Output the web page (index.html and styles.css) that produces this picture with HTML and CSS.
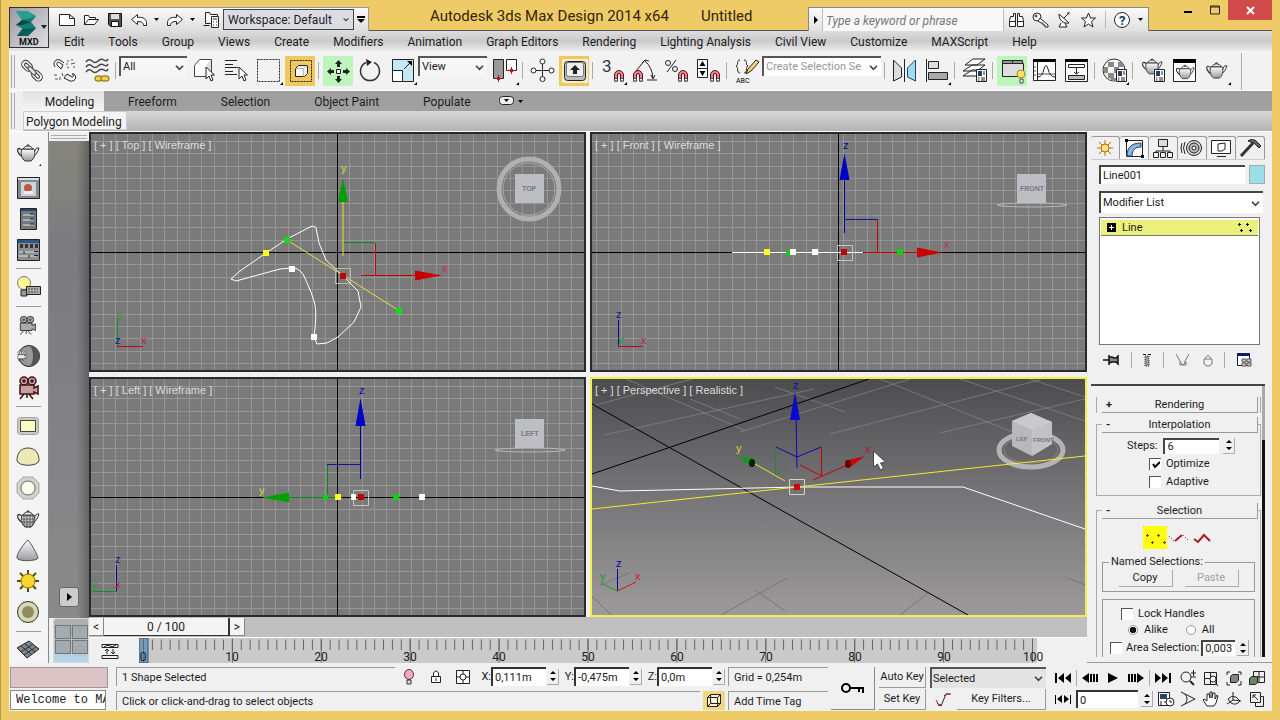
FILE: index.html
```html
<!DOCTYPE html>
<html lang="en">
<head>
<meta charset="utf-8">
<title>Autodesk 3ds Max Design 2014 x64 - Untitled</title>
<link rel="stylesheet" href="styles.css">
</head>
<body>
<svg class="defs" aria-hidden="true">
  <defs>
    <linearGradient id="metal" x1="0" y1="0" x2="0" y2="1"><stop offset="0" stop-color="#fff"/><stop offset="1" stop-color="#9a9a9e"/></linearGradient>
    <linearGradient id="floor" x1="0" y1="0" x2="0" y2="1"><stop offset="0" stop-color="#4c4c4e"/><stop offset="0.35" stop-color="#6a6a6c"/><stop offset="1" stop-color="#9c9a9b"/></linearGradient>
    <pattern id="grid" x="337" y="252" width="37" height="37" patternUnits="userSpaceOnUse">
      <path d="M0 0h1v37H0zM12 0h1v37h-1zM25 0h1v37h-1zM0 0h37v1H0zM0 12h37v1H0zM0 25h37v1H0z" fill="#969696"/>
    </pattern>
    <symbol id="teapot" viewBox="0 0 24 18">
      <path d="M6 6C2 3 1 5 2 8c1 3 3 4 5 5" fill="none" stroke="#333" stroke-width="1.300"/>
      <path d="M17 9c2-1 2-4 4-5h2c-1 4-3 7-6 9z" fill="#eee" stroke="#333"/>
      <path d="M6 5h12c2 5 0 10-3 12H9C6 15 4 10 6 5z" fill="url(#metal)" stroke="#333"/>
      <path d="M7 5c1-2 3-3 5-3s4 1 5 3zM11 2V1h2v1" fill="#eee" stroke="#333"/>
    </symbol>
    <symbol id="magnet" viewBox="0 0 12 13">
      <path d="M1.500 12V6a4.500 4.500 0 0 1 9 0v6H7.500V6a1.500 1.500 0 0 0-3 0v6z" fill="#f08088" stroke="#5a1018"/>
      <path d="M1.500 9.500h3v2.500h-3zM7.500 9.500h3v2.500h-3z" fill="#fff" stroke="#444"/>
    </symbol>
    <symbol id="cursor" viewBox="0 0 10 16">
      <path d="M1 1v12l3-3 2 5 2-1-2-5h3.500z" fill="#fff" stroke="#222"/>
    </symbol>
    <symbol id="dialog" viewBox="0 0 11 13">
      <path d="M.5.5h10v12H.5z" fill="#fff" stroke="#222"/><path d="M2 2h4v5H2z" fill="#23406e"/><path d="M7 3h2M7 5h2M2 9h1.500M5 9h4M2 11h1.500M5 11h4" stroke="#222"/>
    </symbol>
    <symbol id="reel" viewBox="0 0 24 24">
      <circle cx="8" cy="5" r="4"/><circle cx="16" cy="5" r="4"/><path d="M4 9h14v3l4-2v8l-4-2v2H4zM8 18l-4 5M13 18l4 5M11 18v4"/><circle cx="8" cy="5" r="1"/><circle cx="16" cy="5" r="1"/>
    </symbol>
  </defs>
</svg>

<div class="app">
  <header class="head">
    <button class="logo" aria-label="Application menu">
      <svg width="38" height="39" viewBox="0 0 38 39">
        <path d="M6 3h11l9 5-5 6 5 6-8 8H7l6-7-7-4 6-5z" fill="#147d76"/><path d="M6 3h11l9 5-9 3-5 1z" fill="#2a9d92"/><path d="M12 21l14-1-8 8H7z" fill="#0b5c58"/><path d="M6 17l6-5 9 2-8 3z" fill="#0a4a48"/>
        <path d="M31 17h6l-3 4z" fill="#222"/>
        <text x="9" y="37" class="logo-text">MXD</text>
      </svg>
    </button>
    <div class="title-row">
      <div class="qat">
        <button aria-label="New"><svg width="16" height="16"><path d="M.5 2.500h10l5 4v7H.5zM10.500 2.500v4h5" class="ln"/></svg></button>
        <button aria-label="Open"><svg width="16" height="16"><path d="M1.500 12.500v-9h4l1 2h6v2M1.500 12.500l4-5h10l-4 5z" class="ln"/></svg></button>
        <button aria-label="Save"><svg width="16" height="16"><path d="M1.500 1.500h13v13H3.500l-2-2z" fill="#555" stroke="#111"/><path d="M4 2h8v5H4z" fill="#ddd"/><path d="M4.500 9.500h7v5h-7z" fill="#fff" stroke="#111"/></svg></button>
        <button aria-label="Undo"><svg width="16" height="16"><path d="M.5 7.500l6-5v3c6-1 9 2 9 5v3h-3c0-3-2-4-6-4v3z" class="ln"/></svg></button>
        <button class="narrow" aria-label="Undo list"><svg width="6" height="4"><path d="M0 0h5L2.500 3z"/></svg></button>
        <button aria-label="Redo"><svg width="16" height="16"><path d="M15.500 7.500l-6-5v3c-6-1-9 2-9 5v3h3c0-3 2-4 6-4v3z" class="ln"/></svg></button>
        <button class="narrow" aria-label="Redo list"><svg width="6" height="4"><path d="M0 0h5L2.500 3z"/></svg></button>
        <button aria-label="Project folder"><svg width="17" height="17"><path d="M2.500 12.500h5M2.500 12.500v-11h4l1 2h7v3M.5 14.500h6" class="ln"/><path d="M8.500 5.500h7v11h-7z" fill="#fff" stroke="#222"/><path d="M10 8h4M10 11h1M13 11h1M10 14h1M13 14h1" stroke="#222"/></svg></button>
        <select class="workspace" aria-label="Workspace"><option>Workspace: Default</option></select>
        <button class="narrow" aria-label="Customize toolbar"><svg width="8" height="8"><path d="M0 0h8v2H0zM0 3h8L4 7z"/></svg></button>
      </div>
      <h1 class="title"><span>Autodesk 3ds Max Design 2014 x64</span><span>Untitled</span></h1>
      <div class="info">
        <button class="play" aria-label="Collapse search"><svg width="6" height="8"><path d="M1 0l4 4-4 4z"/></svg></button>
        <input type="text" placeholder="Type a keyword or phrase" aria-label="Search">
        <button aria-label="Find"><svg width="17" height="16"><path d="M2.500 4.500h3v-3h2v13h-6v-6zM14.500 4.500h-3v-3h-2v13h6v-6zM1.500 9.500h6M9.500 9.500h6" class="ln"/></svg></button>
        <button aria-label="Subscription"><svg width="17" height="16"><circle cx="5" cy="5" r="4" class="ln"/><circle cx="4" cy="4" r="1" class="ln"/><path d="M8 6l8 7v2h-3v-2h-2v-2H9L6 9z" class="ln"/></svg></button>
        <button aria-label="Communication"><svg width="17" height="16"><path d="M3 2c0 6 4 10 10 9zM8 6l5-5M11 1l3 0M5 11l-2 4h8l-2-4" class="ln"/></svg></button>
        <button aria-label="Favorites"><svg width="17" height="16"><path d="M8.500 1l2 5h5l-4 3.500 1.500 5.500-4.500-3-4.500 3L5.500 9.500l-4-3.500h5z" class="ln"/></svg></button>
        <i class="vsep"></i>
        <button class="help" aria-label="Help"><svg width="18" height="18"><circle cx="9" cy="9" r="7.500" class="ln"/><text x="6" y="14" class="q">?</text></svg></button>
        <button class="narrow" aria-label="Help list"><svg width="6" height="4"><path d="M0 0h5L2.500 3z"/></svg></button>
      </div>
      <div class="win">
        <button aria-label="Minimize"><svg width="10" height="10"><path d="M1 6h8v2H1z"/></svg></button>
        <button aria-label="Maximize"><svg width="12" height="10"><path d="M1.500 1h9v8h-9zM1 2h10" fill="none" stroke="#222"/></svg></button>
        <button class="close" aria-label="Close"><svg width="9" height="9"><path d="M1 1l7 7M8 1l-7 7" stroke="#fff" stroke-width="2"/></svg></button>
      </div>
    </div>
    <nav class="menu">
      <button>Edit</button><button>Tools</button><button>Group</button><button>Views</button><button>Create</button><button>Modifiers</button><button>Animation</button><button>Graph Editors</button><button>Rendering</button><button>Lighting Analysis</button><button>Civil View</button><button>Customize</button><button>MAXScript</button><button>Help</button>
    </nav>
  </header>

  <div class="toolbar">
    <i class="grip"></i>
    <button aria-label="Link"><svg viewBox="0 0 32 36"><g fill="none" stroke="#333" transform="rotate(45 15 17)"><rect x="2.500" y="13.500" width="12" height="8" rx="4"/><rect x="5.500" y="16" width="6" height="3" rx="1.500"/><rect x="16.500" y="13.500" width="12" height="8" rx="4"/><rect x="19.500" y="16" width="6" height="3" rx="1.500"/><rect x="10.500" y="15.500" width="10" height="4" rx="2" fill="#ddd"/></g></svg></button>
    <button aria-label="Unlink"><svg viewBox="0 0 32 36"><g class="nf"><path d="M6 14c-3-4 1-9 5-7l4 3M8 12c-1-2 1-4 3-2l3 2-2 4-4-4M25 21c4 4 0 8-4 7l-6-3 3-4 5 3c2 0 2-2 0-3z"/><path d="M18 8h2M22 7h2M17 11h2M22 11l4-1M18 14l2 1M24 14h2M5 22h3M6 26h3M11 24v3M13 20l1 3" stroke="#555"/></g></svg></button>
    <button aria-label="Bind to space warp"><svg viewBox="0 0 32 36"><path d="M5 9q3-4 6-1t6 0 6-1 4-1M5 14q3-4 6-1t6 0 6-1 4-1M5 19q3-4 6-1t6 0 6-1 4-1" fill="none" stroke="#444" stroke-width="1.500"/><rect x="14" y="23" width="7" height="5" rx="2" fill="#f3d24a" stroke="#7a5c00"/><rect x="20" y="23" width="8" height="5" rx="2" fill="#f3d24a" stroke="#7a5c00"/></svg></button>
    <i class="tsep"></i>
    <select class="w68" aria-label="Selection filter"><option>All</option></select>
    <button aria-label="Select object"><svg viewBox="0 0 32 36"><path d="M6.500 12.500l5-6h12v14l-5 3h-12z" fill="#fdfdfd" stroke="#444"/><path d="M18 23V12l5-5v13z" fill="#ddd"/><use href="#cursor" x="17" y="13" width="10" height="16"/></svg></button>
    <button aria-label="Select by name"><svg viewBox="0 0 32 36"><path d="M5 7.500h12M5 11.500h8M5 14.500h13M5 18.500h8M5 21.500h12" class="nf"/><use href="#cursor" x="18" y="13" width="10" height="16"/></svg></button>
    <button aria-label="Region"><svg viewBox="0 0 32 36"><path d="M5.500 6.500h22v22h-22z" class="nf dash"/><path d="M31 29v3h-3z"/></svg></button>
    <button class="on gold" aria-label="Window crossing"><svg viewBox="0 0 32 36"><path d="M6.500 7.500h21v21h-21z" class="nf dash"/><path d="M11.500 15.500l3-3h9v8l-3 3h-9z" fill="#f6f6f6" stroke="#222"/><path d="M11.500 15.500h8l4-3M19.500 15.500v8" fill="none" stroke="#bbb"/></svg></button>
    <i class="tsep"></i>
    <button class="on green" aria-label="Move"><svg viewBox="0 0 32 36"><path d="M16.500 7l3.500 4h-2v3h-3v-3h-2zM16.500 30l3.500-4h-2v-3h-3v3h-2zM5 18.500l4-3.500v2h3v3H9v2zM28 18.500l-4-3.500v2h-3v3h3v2z" fill="#222"/><path d="M14.500 16.500h4v4h-4z" fill="#fff" stroke="#222"/></svg></button>
    <button aria-label="Rotate"><svg viewBox="0 0 32 36"><path d="M12 9.500a9.500 9.500 0 1 0 8 0" fill="none" stroke="#333" stroke-width="1.500"/><path d="M12 6l6 3-5 4z" fill="#222"/></svg></button>
    <button aria-label="Scale"><svg viewBox="0 0 32 36"><path d="M6.500 6.500h21v22h-21z" fill="#c5e8f5" stroke="#222"/><path d="M6.500 17.500h10v11h-10z" fill="#fff" stroke="#222"/><path d="M18 16l6-6" class="nf"/><path d="M26 8v5l-5-5z"/><path d="M31 29v3h-3z"/></svg></button>
    <select class="w70" aria-label="Reference coordinate system"><option>View</option></select>
    <button aria-label="Pivot"><svg viewBox="0 0 32 36"><path d="M5.500 6.500h10v19h-10z" fill="#999" stroke="#222"/><path d="M18.500 6.500h10v11h-10z" fill="#fff" stroke="#222"/><path d="M10.500 22v7M7 25.500h7M23.500 14v7M20 17.500h7" stroke="#b0132a"/><path d="M9 24h3v3H9zM22 16h3v3h-3z" fill="#b0132a"/><path d="M31 29v3h-3z"/></svg></button>
    <i class="tsep"></i>
    <button aria-label="Manipulate"><svg viewBox="0 0 32 36"><path d="M16.500 10v14M8 17.500h17" class="nf"/><circle cx="16.500" cy="8.500" r="2.500" class="ln"/><circle cx="16.500" cy="26" r="2.500" class="ln"/><circle cx="7.500" cy="17.500" r="2.500" class="ln"/><circle cx="25.500" cy="17.500" r="2.500" class="ln"/></svg></button>
    <button class="on gold" aria-label="Keyboard override"><svg viewBox="0 0 32 36"><path d="M4 6h26v24H4z" fill="#f4ecd0"/><rect x="6.500" y="8.500" width="21" height="19" rx="3" fill="#bbb" stroke="#222"/><rect x="8.500" y="9.500" width="17" height="14" rx="2" fill="#eee" stroke="#777"/><path d="M17 12l5 5h-3v4h-4v-4h-3z" fill="#222"/></svg></button>
    <i class="tsep"></i>
    <button aria-label="Snaps"><svg viewBox="0 0 32 36"><text x="6" y="19" class="big">3</text><use href="#magnet" x="17" y="16" width="12" height="13"/><path d="M31 29v3h-3z"/></svg></button>
    <button aria-label="Angle snap"><svg viewBox="0 0 32 36"><path d="M8 18l9-11M19 27h10M17 8q7 6 8 17M14 10l3-3 4 1M23 22l2 4 2-4" class="nf"/><use href="#magnet" x="4" y="16" width="12" height="13"/></svg></button>
    <button aria-label="Percent snap"><svg viewBox="0 0 32 36"><circle cx="8" cy="10" r="2.500" class="nf"/><circle cx="15" cy="16" r="2.500" class="nf"/><path d="M16 7L7 19" class="nf"/><use href="#magnet" x="17" y="16" width="12" height="13"/></svg></button>
    <button aria-label="Spinner snap"><svg viewBox="0 0 32 36"><path d="M5.500 6.500h10v18h-10zM5 15.500h11" class="ln"/><path d="M10.500 8l3 5h-6zM10.500 23l3-5h-6z"/><use href="#magnet" x="17" y="16" width="12" height="13"/></svg></button>
    <i class="tsep"></i>
    <button aria-label="Edit named selections"><svg viewBox="0 0 32 36"><path d="M10 7c-4 0-1 5-4 6 3 1 0 7 4 7M14 7c4 0 1 5 4 6-3 1 0 7-4 7" class="nf"/><path d="M16 21l2-5 8-9 3 2-8 9z" fill="#f4d474" stroke="#222"/><text x="6" y="30" class="tiny">ABC</text></svg></button>
    <select class="w118 dim" aria-label="Named selection set"><option>Create Selection Se</option></select>
    <i class="tsep"></i>
    <button aria-label="Mirror"><svg viewBox="0 0 32 36"><path d="M5.500 7l8 8v9l-8 4z" fill="#ddd" stroke="#222"/><path d="M27.500 7l-8 8v9l8 4z" fill="#9fdcf2" stroke="#246"/><path d="M16.500 6v23" stroke="#222"/></svg></button>
    <button aria-label="Align"><svg viewBox="0 0 32 36"><path d="M6.500 6v23" stroke="#222"/><path d="M8.500 8.500h10v7h-10z" fill="#ddd" stroke="#222"/><path d="M8.500 19.500h19v7h-19z" fill="#aaa" stroke="#222"/><path d="M31 29v3h-3z"/></svg></button>
    <i class="tsep"></i>
    <button aria-label="Layers"><svg viewBox="0 0 32 36"><path d="M5 23l9-6h13l-8 6zM5 18l9-6h13l-8 6zM7 12l8-6h12l-8 6z" class="ln"/><use href="#dialog" x="18" y="16" width="11" height="13"/></svg></button>
    <i class="tsep"></i>
    <button class="on green" aria-label="Toggle ribbon"><svg viewBox="0 0 32 36"><path d="M6.500 10.500v-3h10v3zM16.500 10.500v-3h10v3z" fill="#999" stroke="#222"/><path d="M6.500 10.500h21v13h-21z" fill="#ddd" stroke="#222"/><circle cx="25" cy="21" r="4" fill="#fbe36b" stroke="#a58a1a"/><path d="M24 26h3v4h-3z" fill="#fff" stroke="#444"/></svg></button>
    <button aria-label="Curve editor"><svg viewBox="0 0 32 36"><path d="M5.500 6.500h22v21h-22zM9.500 8v20" class="ln"/><path d="M5 6h23v3H5z"/><path d="M6 14h2M6 18h2M6 22h2M10 21h17" stroke="#555"/><path d="M10 24q4 0 6-8 2-7 4 0 2 8 7 8" class="nf"/></svg></button>
    <button aria-label="Schematic view"><svg viewBox="0 0 32 36"><path d="M5.500 6.500h22v22h-22z" class="ln"/><path d="M5 6h23v3H5z"/><path d="M8.500 11.500h16v3h-16z" class="ln"/><path d="M8.500 22.500h16v4h-16z" fill="#bbb" stroke="#222"/><path d="M16.500 15v6M14 19l2.500 2 2.500-2" class="nf"/></svg></button>
    <i class="tsep"></i>
    <button aria-label="Material editor"><svg viewBox="0 0 32 36"><circle cx="16" cy="17" r="11" fill="#f5f5f5" stroke="#333"/><path d="M10 9h6v5h-6zM20 9h4l2 5h-6zM6 14h4v6H6zM16 14h5v6h-5zM10 20h6v5h-6zM12 25h6v3h-4z" fill="#888"/><use href="#dialog" x="18" y="16" width="11" height="13"/><path d="M31 29v3h-3z"/></svg></button>
    <i class="tsep"></i>
    <button aria-label="Render setup"><svg viewBox="0 0 32 36"><use href="#teapot" x="5" y="5" width="22" height="17"/><use href="#dialog" x="18" y="16" width="11" height="13"/></svg></button>
    <button aria-label="Rendered frame"><svg viewBox="0 0 32 36"><path d="M5.500 6.500h22v22h-22z" class="ln"/><path d="M5 6h23v4H5z"/><use href="#teapot" x="7" y="11" width="20" height="16"/></svg></button>
    <button aria-label="Render production"><svg viewBox="0 0 32 36"><use href="#teapot" x="5" y="9" width="23" height="17"/><path d="M31 29v3h-3z"/></svg></button>
    <i class="edge"></i>
  </div>

  <div class="ribbon">
    <i class="grip"></i>
    <div class="ribbon-tabs">
      <button class="active">Modeling</button><button>Freeform</button><button>Selection</button><button>Object Paint</button><button>Populate</button>
      <button class="mini" aria-label="Ribbon options"><svg width="26" height="10"><rect x=".5" y=".5" width="14" height="8" rx="3" fill="#eee" stroke="#222"/><path d="M5 3h5l-2.500 3zM19 4h5l-2.500 3z"/></svg></button>
    </div>
    <div class="ribbon-panel"><button>Polygon Modeling</button></div>
  </div>

  <main class="main">
    <aside class="tools">
      <button class="first" aria-label="Teapot"><svg viewBox="0 0 30 31"><use href="#teapot" x="3" y="6" width="24" height="18"/><path d="M28 26v2h-2z"/></svg></button>
      <button aria-label="Render window"><svg viewBox="0 0 30 31"><path d="M4.500 5.500h22v21h-22z" fill="#888" stroke="#222"/><path d="M5 6h21v2H5z" fill="#ddd"/><path d="M8 10h15v14H8z" fill="#c9d4e4"/><circle cx="15" cy="16" r="4" fill="#c0573f"/><path d="M11 19h9v3h-9z" fill="#f0f0f0"/></svg></button>
      <button aria-label="Script listing"><svg viewBox="0 0 30 31"><path d="M7.500 5.500h16v21h-16z" fill="#707880" stroke="#222"/><path d="M8 6h15v2H8z" fill="#24456e"/><path d="M10 12h11M10 17h11M10 22h11" stroke="#e5e5e5"/><path d="M17 11h4M17 16h4M17 21h4" stroke="#222"/></svg></button>
      <button aria-label="Track bars"><svg viewBox="0 0 30 31"><path d="M4.500 5.500h22v21h-22z" fill="#8a8f94" stroke="#222"/><path d="M5 6h21v3H5z" fill="#2c5686"/><path d="M7 10h3v4H7zM12 10h3v4h-3zM17 10h3v4h-3zM22 10h3v4h-3z" fill="#333"/><path d="M6 18h18M6 22h18" stroke="#ddd"/><path d="M11 17v3M16 21v3M21 17.500h4M21 21.500h4" stroke="#222"/></svg></button>
      <hr>
      <button aria-label="Light lister"><svg viewBox="0 0 30 31"><circle cx="11" cy="11" r="6.500" fill="#fafa9a" stroke="#777"/><path d="M8 18h6v6H8z" fill="#999" stroke="#222"/><path d="M13.500 14.500h14v8h-14z" fill="#aaa" stroke="#222"/><path d="M15 17h10M15 20h10" stroke="#444" stroke-dasharray="2 1"/></svg></button>
      <hr>
      <button aria-label="Camera"><svg viewBox="0 0 30 31"><use href="#reel" x="4" y="5" width="20" height="21" fill="#aaa" stroke="#222"/></svg></button>
      <button aria-label="Camera match"><svg viewBox="0 0 30 31"><circle cx="16" cy="15" r="10.500" fill="#999" stroke="#222"/><path d="M17 5a10 10 0 0 1 0 20c4-5 4-15 0-20z" fill="#555"/><use href="#reel" x="3" y="9" width="11" height="12" fill="#eee" stroke="#222"/></svg></button>
      <button aria-label="Record"><svg viewBox="0 0 30 31"><use href="#reel" x="3" y="4" width="24" height="24" fill="#c8a0a0" stroke="#401018" stroke-width="1.500"/></svg></button>
      <hr>
      <button class="gap" aria-label="Rectangle light"><svg viewBox="0 0 30 31"><rect x="4.500" y="6.500" width="21" height="17" rx="3" fill="#c9cbc4" stroke="#a5a5a0"/><path d="M7.500 9.500h15v11h-15z" fill="#fbfbc4" stroke="#444"/></svg></button>
      <button aria-label="Dome light"><svg viewBox="0 0 30 31"><path d="M4 18c0-7 4-12 11-12s11 5 11 12c0 7-22 7-22 0z" fill="#ece9b8" stroke="#444"/></svg></button>
      <button aria-label="Disc light"><svg viewBox="0 0 30 31"><path d="M10 4h10l6 6v10l-6 6H10l-6-6V10z" fill="#d0d0cc" stroke="#aaa"/><circle cx="15" cy="15" r="7" fill="#fdfdea" stroke="#666"/></svg></button>
      <button aria-label="Mesh teapot"><svg viewBox="0 0 30 31"><use href="#teapot" x="3" y="6" width="24" height="18"/><path d="M9 12h13M8 15h14M9 18h12M11 11v11M14 11v13M17 11v13M20 11v10" stroke="#555"/></svg></button>
      <button aria-label="Cone"><svg viewBox="0 0 30 31"><path d="M15 5c2 2 10 15 10 18s-20 4-21 0S13 6 15 5z" fill="url(#metal)" stroke="#555"/></svg></button>
      <button aria-label="Sun"><svg viewBox="0 0 30 31"><path d="M15 4v22M4 15h22M7 7l16 16M23 7L7 23" stroke="#5a4a00" stroke-width="2"/><circle cx="15" cy="15" r="7" fill="#fbd52c" stroke="#8a6a00"/></svg></button>
      <button aria-label="Sphere"><svg viewBox="0 0 30 31"><circle cx="15" cy="15" r="10.500" fill="#d9d7b4" stroke="#333"/><circle cx="15" cy="15" r="6" fill="#8f8c60"/></svg></button>
      <hr>
      <button aria-label="Carpet"><svg viewBox="0 0 30 31"><path d="M4 13l12-7 10 8-12 9z" fill="#7d8792" stroke="#222"/><path d="M8 11l10 8M12 9l10 8M8 17l12-8M11 20l12-8" stroke="#333"/></svg></button>
    </aside>

    <div class="layouts">
      <i class="grip-h"></i>
      <div class="layouts-body"><button class="expand" aria-label="Show layouts"><svg width="7" height="10"><path d="M1 1l5 4-5 4z"/></svg></button></div>
      <button class="quad" aria-label="Four viewports"><i></i><i></i><i></i><i></i></button>
    </div>

    <section class="center">
      <div class="views">
        <div class="view">
          <svg viewBox="91 134 493 236" preserveAspectRatio="xMidYMid slice">
            <path d="M91 134h493v236H91z" fill="#7a7a7a"/><path d="M91 134h493v236H91z" fill="url(#grid)"/>
            <path d="M337 134h1v236h-1zM91 252h493v1H91z"/>
            <path d="M231 279L240 271 266 253 287 239 310 227Q315 225 316 228L319 243 326 260 343 276 358 291 361 307 354 322 338 337 327 343 317 344 314 337Q317 315 315 305T303 274Q297 267 292 268L280 269 236 281z" class="spline"/>
            <path d="M287 240l111 70" stroke="#e6e03a" fill="none"/>
            <path d="M343 202v54" stroke="#e6e62a"/><path d="M338 202l5-24 5 24z" fill="#00a000"/>
            <path d="M344 242.500h31" stroke="#0a8a20"/><path d="M375.500 243v32" stroke="#c80000"/><path d="M361 275.500h55" stroke="#c80000"/><path d="M415 270.500l27 5-27 5z" fill="#c80000"/>
            <path d="M335.500 268.500h15v15h-15z" fill="none" stroke="#c8b4a4"/><path d="M340 273h6v6h-6z" fill="#c00000"/>
            <path d="M284 237h6v6h-6zM396 308h6v6h-6z" fill="#10e010"/><path d="M263 250h6v6h-6z" fill="#ffff20"/><path d="M289 266h6v6h-6zM311 334h6v6h-6z" fill="#fff"/>
            <text x="341" y="172" fill="#d8d840">y</text><text x="442" y="272" fill="#c03048">x</text>
            <path d="M117.500 318v28" stroke="#10902a"/><path d="M117 346.500h26" stroke="#c00020"/>
            <text x="117" y="318" fill="#2a9a30">y</text><text x="115" y="344" fill="#002090">z</text><text x="141" y="344" fill="#c02040">x</text>
            <circle cx="529" cy="189" r="30" fill="none" stroke="#b0b0b4" stroke-width="5"/><circle cx="529" cy="189" r="26" fill="none" stroke="#a8a8aa"/>
            <path d="M515 174h29v29h-29z" fill="#bdbdc4"/><text x="522" y="191" class="cube">TOP</text>
          </svg>
          <div class="tag"><button>[ + ]</button><button>[ Top ]</button><button>[ Wireframe ]</button></div>
        </div>
        <div class="view">
          <svg viewBox="592 134 493 236" preserveAspectRatio="xMidYMid slice">
            <path d="M592 134h493v236H592z" fill="#7a7a7a"/><path d="M592 134h493v236H592z" fill="url(#grid)"/>
            <path d="M838 134h1v236h-1zM592 252h493v1H592z"/>
            <path d="M732 252.500h131" stroke="#fff"/>
            <path d="M844.500 179v54" stroke="#0000a8"/><path d="M839.500 180l5-27 5 27z" fill="#0000c8"/><path d="M845 219.500h33" stroke="#1010a0"/>
            <path d="M877.500 220v32" stroke="#c80000"/><path d="M864 252.500h54" stroke="#c80000"/><path d="M917 247.500l25 5-25 5z" fill="#c80000"/>
            <path d="M837.500 245.500h15v15h-15z" fill="none" stroke="#d0c4b8"/><path d="M841 249h6v6h-6z" fill="#c00000"/>
            <path d="M786 250h5v5h-5zM897 249h6v6h-6z" fill="#10d010"/><path d="M764 249h6v6h-6z" fill="#ffff20"/><path d="M790 249h6v6h-6zM812 249h6v6h-6z" fill="#fff"/>
            <text x="843" y="149" fill="#0808a0">z</text><text x="944" y="248" fill="#c03048">x</text>
            <path d="M618.500 320v27" stroke="#0000a0"/><path d="M618 346.500h25" stroke="#c00020"/>
            <text x="616" y="318" fill="#002090">z</text><text x="641" y="344" fill="#c02040">x</text><text x="618" y="343" fill="#10a020">y</text>
            <ellipse cx="1032" cy="205" rx="35" ry="2" fill="none" stroke="#b8b8b8"/>
            <path d="M1017 174h29v29h-29z" fill="#bdbdc4"/><text x="1020" y="191" class="cube">FRONT</text>
          </svg>
          <div class="tag"><button>[ + ]</button><button>[ Front ]</button><button>[ Wireframe ]</button></div>
        </div>
        <div class="view">
          <svg viewBox="91 379 493 236" preserveAspectRatio="xMidYMid slice">
            <path d="M91 379h493v236H91z" fill="#7a7a7a"/><path d="M91 134h493v236H91z" fill="url(#grid)" transform="translate(0 245)"/>
            <path d="M337 379h1v236h-1zM91 497h493v1H91z"/>
            <path d="M360.500 425v54" stroke="#0000a8"/><path d="M355.500 426l5-28 5 28z" fill="#0000c8"/><path d="M327 464.500h34" stroke="#1010a0"/>
            <path d="M327.500 465v32M288 497.500h54" stroke="#0a8a20"/><path d="M289 492.500l-27 5 27 5z" fill="#00a000"/>
            <path d="M353.500 490.500h15v15h-15z" fill="none" stroke="#d0c4b8"/><path d="M358 494h6v6h-6z" fill="#c00000"/>
            <path d="M323 495h5v5h-5zM393 494h6v6h-6z" fill="#10d010"/><path d="M335 494h6v6h-6z" fill="#ffff20"/><path d="M351 494h5v6h-5zM419 494h6v6h-6z" fill="#fff"/>
            <text x="359" y="394" fill="#0808a0">z</text><text x="259" y="494" fill="#d8d840">y</text>
            <path d="M116.500 565v27" stroke="#0000a0"/><path d="M93 591.500h24" stroke="#10902a"/>
            <text x="115" y="563" fill="#002090">z</text><text x="115" y="588" fill="#c02040">x</text><text x="91" y="589" fill="#2a9a30">y</text>
            <ellipse cx="530" cy="450" rx="35" ry="2" fill="none" stroke="#b8b8b8"/>
            <path d="M515 419h29v29h-29z" fill="#bdbdc4"/><text x="521" y="436" class="cube">LEFT</text>
          </svg>
          <div class="tag"><button>[ + ]</button><button>[ Left ]</button><button>[ Wireframe ]</button></div>
        </div>
        <div class="view active">
          <svg viewBox="592 379 493 236" preserveAspectRatio="xMidYMid slice">
            <path d="M592 379h493v236H592z" fill="url(#floor)"/>
            <g stroke="#88888a" stroke-opacity=".7" fill="none">
              <path d="M592 406l100-27M604 435l210-46M740 432l170-53M830 434l210-54M940 433l145-34"/>
              <path d="M626 379l120 52M775 387l70 25M880 379l150 60M960 379l125 42M1030 379l55 18M690 399l50 20"/>
            </g>
            <path d="M721 615l66-37M755 590l30 21M900 615l28-22M592 596l20 20M1065 577l20 8M600 585l30-12" stroke="#777" fill="none"/>
            <path d="M592 474l277-95M592 404l376 211" stroke="#000" fill="none"/>
            <path d="M592 486l28 5 180-4h163l122 42" class="spline"/>
            <path d="M797 468l-1-50M776 447l21 10 24-10" stroke="#0808b8" fill="none"/><path d="M790 420l5-28 5 28z" fill="#0808d0"/>
            <path d="M821.500 447v30M813 480l34-15M800 465l22 11" stroke="#c80010" fill="none"/><path d="M845 461l20-5-16 12z" fill="#d00000"/><ellipse cx="848" cy="464" rx="3" ry="4" fill="#600"/>
            <path d="M775.500 449v26l13-7" stroke="#208a30" fill="none"/><path d="M755 464l30 17" stroke="#e8e428"/><path d="M738 456l17 3-3 8z" fill="#08a010"/><ellipse cx="752" cy="463" rx="3" ry="4" fill="#020"/>
            <text x="793" y="389" fill="#0808c0">z</text><text x="736" y="452" fill="#d8d840">y</text><text x="865" y="453" fill="#b01830">x</text>
            <path d="M617.500 569v22" stroke="#0000b0"/><path d="M617 591l19-9" stroke="#d01020"/><path d="M617 591l-16-8" stroke="#10a020"/>
            <text x="616" y="567" fill="#0010a0">z</text><text x="635" y="580" fill="#d01830">x</text><text x="600" y="580" fill="#209a30">y</text>
            <ellipse cx="1031" cy="450" rx="32" ry="17" fill="none" stroke="#b4b4b6" stroke-width="5"/><ellipse cx="1031" cy="450" rx="27" ry="13" fill="none" stroke="#888"/>
            <path d="M1012 421l19-8 21 9v22l-20 12-20-10z" fill="#b8b8ba"/><path d="M1012 421l19-8 21 9-20 8z" fill="#cacacc"/><path d="M1032 430l20-8v22l-20 12z" fill="#c2c2c4"/>
            <text x="1016" y="441" class="cube small">LEF</text><text x="1033" y="442" class="cube small">FRONT</text>
            <path d="M592 509l205-22 288-31" stroke="#f0ec30" fill="none"/>
            <path d="M789.500 479.500h15v15h-15z" fill="none" stroke="#ddd0c8"/><path d="M794 484h6v6h-6z" fill="#d00010"/>
            <path d="M873.500 451v16l4-3 3 6 3-2-3-5 5-1z" fill="#fff" stroke="#444"/>
          </svg>
          <div class="tag"><button>[ + ]</button><button>[ Perspective ]</button><button>[ Realistic ]</button></div>
        </div>
      </div>
      <div class="slider">
        <button aria-label="Previous frame">&lt;</button><button class="thumb">0 / 100</button><button aria-label="Next frame">&gt;</button>
      </div>
      <div class="track">
        <button class="mini-curve" aria-label="Mini curve editor"><svg width="18" height="18"><path d="M1 2.500h16v3H1zM1 13.500h16v3H1zM3 5q3-3 6-1t6-1M6 7v5M12 7v5M4 9l2-2 2 2M10 10l2 2 2-2" class="nf"/></svg></button>
        <div class="ruler">
          <svg viewBox="0 0 900 26" preserveAspectRatio="none"><path d="M0 0h9v26H0z" fill="#6f9cc0" stroke="#35506a"/><path d="M4 7h892" stroke="#666" stroke-width="11" stroke-dasharray="1 7.910" fill="none"/><path d="M4 13h892" stroke="#666" stroke-width="25" stroke-dasharray="1 88.100" fill="none"/></svg>
          <ol><li>0</li><li>10</li><li>20</li><li>30</li><li>40</li><li>50</li><li>60</li><li>70</li><li>80</li><li>90</li><li>100</li></ol>
        </div>
      </div>
    </section>

    <aside class="panel">
      <div class="tabs">
        <button aria-label="Create"><svg width="24" height="20"><path d="M12 2v16M4 10h16M6 4l12 12M18 4L6 16" stroke="#b86a10"/><circle cx="12" cy="10" r="4" fill="#ffe080" stroke="#b86a10"/></svg></button>
        <button class="active" aria-label="Modify"><svg width="24" height="20"><path d="M4.500 2.500h16v16h-16z" class="nf"/><path d="M5 18c0-9 5-13 14-13v4c-6 0-9 3-9 9z" fill="#8ab8dc" stroke="#246"/><path d="M3 1h3v3H3zM19 17h3v3h-3z"/></svg></button>
        <button aria-label="Hierarchy"><svg width="24" height="20"><path d="M7.500 1.500h9v7h-9z" fill="#ddd" stroke="#222"/><path d="M12 9v4M5 15v-2h14v2M2.500 14.500h5v5h-5zM9.500 14.500h5v5h-5zM16.500 14.500h5v5h-5z" class="nf"/></svg></button>
        <button aria-label="Motion"><svg width="24" height="20"><circle cx="14" cy="10" r="7.500" fill="#ddd" stroke="#222"/><circle cx="14" cy="10" r="5" fill="#bbb" stroke="#222"/><circle cx="14" cy="10" r="2" fill="#fff" stroke="#222"/><path d="M5 4q-3 6 0 12M2 5q-2 5 0 10" class="nf"/></svg></button>
        <button aria-label="Display"><svg width="24" height="20"><path d="M2.500 2.500h19v13h-19zM8 18.500h9M9 6l7-1v6l-3 2H9z" class="ln"/></svg></button>
        <button aria-label="Utilities"><svg width="24" height="20"><path d="M3 18L15 5" stroke="#333" stroke-width="3"/><path d="M10 3c4-3 8-1 10 2l3 3-2 2-5-5z" fill="#666" stroke="#222"/></svg></button>
      </div>
      <div class="name-row"><input type="text" value="Line001" aria-label="Object name"><button class="swatch" aria-label="Object color"></button></div>
      <select class="modlist" aria-label="Modifier List"><option>Modifier List</option></select>
      <div class="stack">
        <div class="stack-row"><svg width="9" height="9"><path d="M0 0h9v9H0z"/><path d="M2 4.500h5M4.500 2v5" stroke="#fff"/></svg><span>Line</span><svg class="dots" width="14" height="10"><path d="M0 1h3v1H0zM1 0h1v3H1zM8 1h3v1H8zM9 0h1v3H9zM2 7h3v1H2zM3 6h1v3H3zM11 7h3v1h-3zM12 6h1v3h-1z"/></svg></div>
      </div>
      <div class="stack-tools">
        <button aria-label="Pin stack"><svg width="18" height="14"><path d="M1 7h6M7 2v10M7 4h3l2 1h2l2-2v8l-2-2h-4l-3 1" fill="#888" stroke="#111" stroke-width="1.500"/></svg></button><i></i>
        <button aria-label="Show end result"><svg width="10" height="14"><path d="M1 1.500h3M6 1.500h3" stroke="#111"/><path d="M3 3h4v10H3z" fill="#999" stroke="#333" stroke-dasharray="1 1"/></svg></button><i></i>
        <button aria-label="Make unique"><svg width="16" height="14"><path d="M1 1l5 9M14 1L9 10M5 9l3 3 3-3v3H5z" fill="none" stroke="#777"/></svg></button>
        <button aria-label="Remove modifier"><svg width="12" height="14"><path d="M2 6h8v5q-4 4-8 0zM3 6q3-7 6 0" fill="none" stroke="#777"/></svg></button><i></i>
        <button aria-label="Configure sets"><svg width="16" height="15"><path d="M1.500 1.500h12v12h-12z" fill="#fff" stroke="#123"/><path d="M1 1h13v3H1z" fill="#0c1c66"/><path d="M6 7h4v3H6zM11 7h4v3h-4zM6 11h4v3H6zM11 11h4v3h-4z" fill="#ccc" stroke="#555"/></svg></button>
      </div>
      <div class="rollouts">
        <section class="roll shut"><h2><button><b>+</b>Rendering</button></h2></section>
        <section class="roll"><h2><button><b>-</b>Interpolation</button></h2>
          <div class="steps"><label for="steps">Steps:</label><input id="steps" type="text" value="6"><span class="spin"></span></div>
          <label class="chk"><input type="checkbox" checked>Optimize</label>
          <label class="chk"><input type="checkbox">Adaptive</label>
        </section>
        <section class="roll"><h2><button><b>-</b>Selection</button></h2>
          <div class="levels">
            <button class="on" aria-label="Vertex"><svg width="24" height="23"><path d="M3 9.500h3M4.500 8v3M14 9.500h3M15.500 8v3M8 16.500h3M9.500 15v3M20 16.500h3M21.500 15v3" stroke="#a03000"/></svg></button>
            <button aria-label="Segment"><svg width="24" height="23"><path d="M8 15l7-6" stroke="#b01820" stroke-width="2"/><path d="M2 10l5 5M16 9l6 6" stroke="#222" stroke-dasharray="1 2"/></svg></button>
            <button aria-label="Spline"><svg width="24" height="23"><path d="M3 13l4 3 6-7 6 6" fill="none" stroke="#b01820" stroke-width="2"/></svg></button>
          </div>
          <fieldset class="named"><legend>Named Selections:</legend><button>Copy</button><button disabled>Paste</button></fieldset>
          <fieldset class="handles">
            <label class="chk"><input type="checkbox">Lock Handles</label>
            <div class="radios"><label><input type="radio" name="h" checked>Alike</label><label><input type="radio" name="h">All</label></div>
            <div class="area"><label><input type="checkbox">Area Selection:</label><input type="text" value="0,003" aria-label="Area"><span class="spin"></span></div>
          </fieldset>
        </section>
      </div>
    </aside>
  </main>

  <footer class="status">
    <div class="listener"><div class="pink"></div><input type="text" value="Welcome to MAXScript." aria-label="MAXScript listener"></div>
    <div class="info-rows">
      <div class="row">
        <output class="box grow">1 Shape Selected</output>
        <button class="ic" aria-label="Isolate"><svg width="12" height="16"><ellipse cx="6" cy="5.500" rx="4.500" ry="5" fill="#f0a8c4" stroke="#6a2038"/><path d="M4 11h4v4H4z" fill="#ddd" stroke="#333"/></svg></button>
        <button class="ic" aria-label="Lock"><svg width="12" height="16"><path d="M1.500 7.500h9v6h-9zM3.500 7V4q2.500-4 5 0v3M6 9v3" class="ln"/></svg></button>
        <button class="ic" aria-label="Absolute mode"><svg width="16" height="16"><path d="M1.500 1.500h13v13h-13zM8 1v4M8 11v4M1 8h4M11 8h4" class="ln"/><circle cx="8" cy="8" r="3" class="ln"/></svg></button>
        <label for="cx">X:</label><input id="cx" type="text" value="0,111m"><span class="spin"></span>
        <label for="cy">Y:</label><input id="cy" type="text" value="-0,475m"><span class="spin"></span>
        <label for="cz">Z:</label><input id="cz" type="text" value="0,0m"><span class="spin"></span>
        <output class="box right">Grid = 0,254m</output>
      </div>
      <div class="row">
        <output class="box grow">Click or click-and-drag to select objects</output>
        <button class="iso" aria-label="Adaptive degradation"><svg width="16" height="15"><path d="M1.500 4.500l3-3h10v9l-3 3h-10zM1.500 4.500h10v9M11.500 4.500l3-3M4.500 2v8.500h10M4.500 10.500l-3 3" fill="#fff" fill-opacity=".7" stroke="#222"/></svg></button>
        <button class="box right">Add Time Tag</button>
      </div>
    </div>
    <button class="key" aria-label="Set keys"><svg width="26" height="14"><circle cx="6" cy="7" r="4" fill="none" stroke="#000" stroke-width="2"/><path d="M10 6h14v2H10zM18 8h2v3h-2zM22 8h2v4h-2z"/></svg></button>
    <div class="keys"><button>Auto Key</button><button>Set Key</button></div>
    <div class="filters">
      <select aria-label="Key selection"><option>Selected</option></select>
      <div><button class="tangent" aria-label="Tangents"><svg width="18" height="16"><path d="M2 11l4 3L11 2h4" fill="none" stroke="#222"/><path d="M1 8l3 6 2-2M9 4l2-2 5 0" fill="none" stroke="#b02040"/></svg></button><button class="kf">Key Filters...</button></div>
    </div>
    <div class="play-area">
      <div>
        <button aria-label="Go to start"><svg width="18" height="12"><path d="M1 1h2v10H1zM10 1v10L4 6zM17 1v10l-6-5z"/></svg></button><i></i>
        <button aria-label="Previous"><svg width="18" height="12"><path d="M8 1v10L1 6zM9 2h2v8H9zM12 2h2v8h-2zM15 2h2v8h-2z"/></svg></button>
        <button aria-label="Play"><svg width="18" height="12"><path d="M4 1v10l10-5z"/></svg></button>
        <button aria-label="Next"><svg width="18" height="12"><path d="M10 1v10l7-5zM1 2h2v8H1zM4 2h2v8H4zM7 2h2v8H7z"/></svg></button><i></i>
        <button aria-label="Go to end"><svg width="18" height="12"><path d="M15 1h2v10h-2zM8 1v10l6-5zM1 1v10l6-5z"/></svg></button>
      </div>
      <div><button aria-label="Key mode"><svg width="18" height="12"><path d="M1 2h1v9H1zM8 2v8L3 6zM10 2v8l5-4zM16 2h1v9h-1z"/></svg></button><input type="text" value="0" aria-label="Current frame"><span class="spin"></span>
        <button aria-label="Time configuration"><svg width="18" height="18"><path d="M1.500 2.500h11v13h-11z" class="ln"/><path d="M3 4h7v5H3z" fill="#24456e"/><path d="M3 12h2M7 12h2M3 14h2" class="nf"/><circle cx="13" cy="12" r="4" class="ln"/><path d="M13 10v2h2" class="nf"/></svg></button>
      </div>
    </div>
    <div class="nav">
      <button aria-label="Zoom"><svg width="20" height="18"><circle cx="8" cy="8" r="5" class="nf"/><path d="M12 12l4 4" stroke="#222" stroke-width="2"/><path d="M13 4h5M15.500 1v6M13 8h5" class="nf"/></svg></button>
      <button aria-label="Zoom all"><svg width="20" height="18"><path d="M3.500 3.500h12v12h-12zM9.500 3v13M3 9.500h13" class="nf"/><circle cx="12" cy="10" r="3" class="ln"/><path d="M14 13l3 4" class="nf"/></svg></button>
      <button aria-label="Zoom extents"><svg width="20" height="18"><path d="M3 6V3h3M14 3h3v3M3 13v3h3M17 12v4h-3" class="nf"/><path d="M6.500 7.500l2-2h6v6l-2 2h-6z" fill="#7b8a78" stroke="#222"/></svg></button>
      <button aria-label="Zoom extents all"><svg width="20" height="18"><path d="M6.500 2.500h11v11h-11zM12 2v12M6 8h12" class="nf"/><path d="M2.500 9.500l2-2h6v6l-2 2h-6z" fill="#6a8560" stroke="#222"/></svg></button>
      <button aria-label="Field of view"><svg width="20" height="18"><path d="M3 2l14 7-14 7M7 4q4 5 0 10" class="nf"/></svg></button>
      <button aria-label="Pan"><svg width="20" height="18"><path d="M6 16L2 10l1-1 3 2V4l2 0 1 4V2h2v6l1-5h2v6l2-4 1 1-2 7-2 3z" class="ln"/></svg></button>
      <button aria-label="Orbit"><svg width="20" height="18"><path d="M9 2v8l-6 4M9 10l8 1M4 9q3-4 8-2l4 4q-4 5-9 2z" class="nf"/></svg></button>
      <button aria-label="Maximize viewport"><svg width="20" height="18"><path d="M3.500 2.500h10v10h-10zM14 6.500h2.500v10h-8V13M6 5h3M6 5v3M6 5l5 5" class="nf"/></svg></button>
    </div>
  </footer>
</div>
</body>
</html>
```

FILE: styles.css
```css
* { box-sizing: border-box; }
html, body { margin: 0; height: 100%; }
body { background: #efcb68; font: 12px/16px Roboto, "Noto Sans", sans-serif; color: #1c1c1c; overflow: hidden; }
button, input, select { font: inherit; color: inherit; margin: 0; padding: 0; border: 0; background: none; border-radius: 0; outline: 0; }
button { display: flex; align-items: center; justify-content: center; white-space: nowrap; }
input[type="text"] { min-width: 0; }
svg { display: block; }
.defs { position: absolute; width: 0; height: 0; }
select { appearance: none; background: no-repeat right 3px center / 9px 7px url("data:image/svg+xml,%3Csvg xmlns='http://www.w3.org/2000/svg' viewBox='0 0 10 8'%3E%3Cpath d='M1 2l4 4 4-4' fill='none' stroke='%23444' stroke-width='2'/%3E%3C/svg%3E"); }
.ln { fill: #fff; stroke: #222; }
.nf { fill: none; stroke: #222; }
.dash { stroke-dasharray: 2 1; }

.app { display: flex; flex-direction: column; height: 100vh; padding: 0 8px 9px 8px; border-left: 1px solid #b89a48; }

/* Title and menus */
.head { display: grid; grid-template-columns: 40px 1fr; grid-template-rows: 31px 20px; background: linear-gradient(#efcb68 31px, #ddd 31px, #e6e6e6); }
.logo { grid-row: 1 / 3; margin: 7px 0 3px; border: 1px solid #333; background: linear-gradient(135deg, #9a98a4, #e0dfe4); }
.logo-text { font: bold 9px Roboto, sans-serif; fill: #111; }
.title-row { display: flex; align-items: flex-start; border-bottom: 1px solid #555; }
.qat { display: flex; align-items: center; height: 24px; margin-top: 7px; padding-left: 6px; background: linear-gradient(#fafafa, #ddd); border: 1px solid #999; border-width: 1px 1px 0 0; }
.qat button { width: 24px; height: 22px; flex: none; }
.qat .narrow { width: 12px; }
.qat button:nth-of-type(8) { width: 24px; }
.workspace { width: 131px; height: 21px; padding-left: 4px; border: 1px solid #444; background-color: #dcdce4; background-size: 6px 5px; background-position: right 4px center; }
.qat .narrow:last-child { width: 14px; }
.title { display: flex; flex: 1; gap: 32px; margin: 5px 0 0; padding-left: 61px; font: 15px/22px Roboto, "Noto Sans", sans-serif; color: #33240a; white-space: nowrap; }
.info { display: flex; align-items: center; height: 24px; margin-top: 7px; background: linear-gradient(#fafafa, #e0e0e0); border: 1px solid #888; border-bottom: 0; }
.info button { width: 24px; height: 22px; }
.info .play { width: 14px; border-right: 1px solid #bbb; }
.info input { width: 181px; height: 22px; padding: 2px 0 0 3px; background: #f8f8f8; border-right: 1px solid #bbb; font-style: italic; }
.info input::placeholder { color: #777; opacity: 1; }
.info .vsep { width: 1px; height: 18px; margin: 0 4px 0 5px; background: #bbb; }
.info .narrow { width: 14px; }
.q { font: bold 13px Roboto, sans-serif; fill: #123a6e; }
.win { display: flex; height: 20px; margin-left: 25px; }
.win button { width: 27px; height: 20px; }
.win .close { width: 44px; background: #cf4a48; }
.menu { display: flex; align-items: center; gap: 24px; padding: 2px 0 0 15px; background: linear-gradient(#ddd, #c9c9cb 50%, #ececec); white-space: nowrap; }

/* Main toolbar */
.toolbar { display: flex; align-items: flex-start; height: 40px; padding-top: 2px; background: #f2f2f2; border-bottom: 1px solid #fff; }
.grip { width: 4px; margin: 2px; border: solid #aaa; border-width: 0 1px; align-self: stretch; flex: none; }
.edge { width: 1px; margin-left: 9px; background: #aaa; align-self: stretch; }
.toolbar button { width: 32px; height: 36px; flex: none; }
.toolbar button svg { width: 32px; height: 36px; }
.toolbar .on { background: no-repeat center / 30px 30px linear-gradient(#bdf5bd, #bdf5bd); }
.toolbar .gold { background-image: linear-gradient(#f0c860, #f0c860); }
.tsep { width: 1px; height: 17px; margin: 9px 3px 0 2px; background: #aaa; flex: none; }
.toolbar select { height: 20px; margin: 3px 1px 0 0; padding-left: 2px; border: solid #555; border-width: 2px 0 0 2px; background-color: #f6f6f6; font-size: 11px; flex: none; }
.w68 { width: 68px; }
.w70 { width: 69px; }
.w118 { width: 119px; }
.toolbar .dim { color: #999; background-color: #fff; }
.big { font: 17px Roboto, sans-serif; fill: #333; }
.tiny { font: 7px Roboto, sans-serif; }

/* Ribbon */
.ribbon { display: grid; grid-template: 20px 20px / 14px 1fr; background: #f0f0f0; border-bottom: 1px solid #fff; }
.ribbon .grip { grid-row: 1 / 3; }
.ribbon-tabs { display: flex; background: #a0a0a0; }
.ribbon-tabs button { height: 20px; padding: 2px 20px 0; margin-right: 4px; }
.ribbon-tabs .active { width: 81px; padding: 2px 8px 0 20px; background: linear-gradient(#e0e0e0, #f6f6f6); }
.ribbon-tabs .mini { padding: 0 4px; }
.ribbon-panel { background: linear-gradient(#d8d8d8, #b4b4b4); }
.ribbon-panel button { height: 19px; padding: 2px 4px 0 2px; background: #f4f4f4; border: 1px solid #ccc; }

/* Work area */
.main { display: flex; flex: 1; min-height: 0; background: #f0f0f0; }
.tools { width: 40px; flex: none; padding: 4px 4px 0; overflow: hidden; border-right: 1px solid #888; background: #f4f4f4; }
.tools button { width: 30px; height: 31px; }
.tools button svg { width: 30px; height: 31px; }
.tools .first { margin: 2px 0 3px; }
.tools hr { height: 1px; margin: 3px; border: 0; background: #999; }
.tools .gap { margin-top: 4px; }
.layouts { display: flex; flex-direction: column; width: 40px; flex: none; }
.grip-h { height: 4px; margin: 3px 2px 2px; border: solid #aaa; border-width: 1px 0; flex: none; }
.layouts-body { flex: 1; display: flex; align-items: flex-end; justify-content: center; padding-bottom: 11px; background: linear-gradient(90deg, rgba(0,0,0,0) 70%, rgba(0,0,0,.25)), linear-gradient(#85857d, #7b7b80 25%, #8a8a8a); }
.expand { width: 20px; height: 20px; border: 1px solid #666; border-radius: 3px; background: #ccc; }
.quad { display: grid; grid-template-columns: 16px 16px; align-content: start; gap: 1px; height: 45px; margin-left: 4px; padding-top: 6px; border: 1px solid #d8d8d8; border-radius: 3px 0 0 0; background: linear-gradient(#b0b0b0 30%, #b4d8ee); }
.quad i { height: 14px; background: #a4aaad; border: 1px solid #70787c; }
.center { flex: 1; min-width: 0; display: flex; flex-direction: column; }
.views { flex: 1; min-height: 0; display: grid; grid-template: 1fr 1fr / 1fr 1fr; gap: 5px 4px; }
.view { position: relative; min-width: 0; min-height: 0; border: 2px solid #28282e; background: #7b7b7b; }
.view.active { border-color: #f4ee48; }
.view > svg { width: 100%; height: 100%; }
.view text { font: 11px "Liberation Sans", sans-serif; }
.view .cube { font: bold 7px "Liberation Sans", sans-serif; fill: #77777f; }
.view .small { font-size: 6px; }
.spline { fill: none; stroke: #fff; }
.tag { position: absolute; top: 3px; left: 3px; display: flex; gap: 3px; color: #dcdcdc; font: 11px/16px "Liberation Sans", sans-serif; }
.slider { display: flex; align-items: center; height: 20px; background: #bfbfbf; }
.slider button { width: 15px; height: 18px; background: #f4f4f4; border: solid #888; border-width: 0 1px 1px 0; }
.slider .thumb { width: 126px; border: 1px solid #333; border-width: 0 2px 1px 0; }
.track { display: flex; height: 26px; border-top: 1px solid #fff; }
.mini-curve { width: 50px; padding-right: 8px; }
.ruler { position: relative; flex: 1; margin-right: 50px; background: #cacaca; }
.ruler svg { width: 100%; height: 100%; }
.ruler ol { position: absolute; inset: 11px 4px 0 4px; display: flex; justify-content: space-between; margin: 0; padding: 0; list-style: none; }
.ruler li { display: flex; justify-content: center; width: 0; }

/* Command panel */
.panel { width: 185px; flex: none; display: flex; flex-direction: column; padding: 4px 7px 0 4px; border-bottom: 1px solid #999; font-size: 11px; }
.tabs { display: flex; height: 24px; flex: none; border-bottom: 1px solid #ccc; }
.tabs button { width: 29px; border: solid #999; border-width: 1px 1px 0 0; border-radius: 3px 3px 0 0; }
.tabs .active { background: #f8f8f8; }
.name-row { display: flex; gap: 4px; margin: 5px 0 0 8px; height: 19px; flex: none; }
.name-row input { width: 146px; }
.panel input[type="text"], .modlist { padding-left: 2px; background-color: #fff; border: solid #444; border-width: 2px 0 0 2px; }
.swatch { width: 16px; background: #98dfe8; border: 1px solid #aaa; }
.modlist { height: 22px; margin: 7px 2px 0 8px; flex: none; }
.stack { height: 128px; flex: none; margin: 4px 5px 0 8px; background: #fff; border: 1px solid #777; padding: 2px 1px; }
.stack-row { display: flex; align-items: center; gap: 6px; height: 16px; padding: 0 6px; background: #ebf07a; border-bottom: 1px solid #777; }
.stack-row .dots { margin-left: auto; }
.stack-tools { display: flex; align-items: center; justify-content: space-between; height: 29px; flex: none; margin: 0 13px 10px 11px; }
.stack-tools i { width: 1px; height: 16px; background: #aaa; }
.rollouts { flex: 1; min-height: 0; overflow: hidden; margin-bottom: 5px; padding: 11px 4px 0 5px; border-top: 2px solid #444; background: no-repeat right top / 3px 100% linear-gradient(#aaa 54px, #111 54px); }
.roll { margin-bottom: 14px; border: 1px solid #aaa; padding-bottom: 4px; }
.roll h2 { margin: -8px 2px 0 5px; font: inherit; }
.roll h2 button { position: relative; width: 100%; height: 16px; background: #f0f0f0; border: solid #999; border-width: 0 1px 1px 0; }
.roll h2 b { position: absolute; left: 4px; }
.roll.shut { border-width: 0 1px; padding: 0; margin-bottom: 11px; }
.roll.shut h2 { margin-top: 0; }
.steps { display: flex; align-items: center; gap: 4px; margin: 4px 0 1px 30px; height: 17px; }
.steps input { width: 56px; height: 16px; margin-left: 2px; }
.spin { width: 12px; height: 16px; border: solid #aaa; border-width: 0 1px 1px 0; background: no-repeat center / 6px 12px url("data:image/svg+xml,%3Csvg xmlns='http://www.w3.org/2000/svg' viewBox='0 0 6 12'%3E%3Cpath d='M0 4h6L3 1zM0 8h6L3 11z'/%3E%3C/svg%3E"); flex: none; }
.chk { display: flex; align-items: center; gap: 5px; height: 18px; margin-left: 52px; }
input[type="checkbox"] { appearance: none; width: 12px; height: 12px; background: #fff; border: solid #555; border-width: 1px 0 0 1px; flex: none; }
input[type="checkbox"]:checked { background: #fff center / 10px 10px url("data:image/svg+xml,%3Csvg xmlns='http://www.w3.org/2000/svg' viewBox='0 0 10 10'%3E%3Cpath d='M2 4l2 3 5-5' fill='none' stroke='%23000' stroke-width='2'/%3E%3C/svg%3E"); }
input[type="radio"] { appearance: none; width: 10px; height: 10px; border-radius: 50%; background: #fff; border: 1px solid #999; }
input[type="radio"]:checked { background: radial-gradient(#111 3px, #fff 3px); }
.levels { display: flex; margin: 7px 0 0 46px; }
.levels .on { background: #ffff10; }
fieldset { margin: 5px 5px 0; padding: 0 0 4px; border: 1px solid #999; min-width: 0; }
.named { display: flex; justify-content: center; gap: 12px; }
legend { margin-left: 6px; padding: 0 2px; height: 16px; }
.named button { width: 54px; height: 17px; border: solid #aaa; border-width: 0 1px 1px 0; }
.named button:disabled { color: #a0a0a0; }
.handles { margin-top: 7px; padding-top: 5px; }
.handles .chk { margin-left: 18px; }
.radios { display: flex; gap: 18px; height: 13px; margin-left: 25px; }
.radios label, .area label { display: flex; align-items: center; gap: 6px; }
.area label { gap: 4px; }
.area { display: flex; align-items: center; height: 16px; margin: 4px 0 0 7px; gap: 2px; white-space: nowrap; }
.area input[type="text"] { width: 34px; height: 16px; }

/* Status bar */
.status { display: flex; height: 48px; flex: none; background: #f0f0f0; padding: 4px 4px 1px 1px; font-size: 11px; }
.listener { display: grid; grid-template-rows: 1fr 1fr; gap: 2px; width: 98px; margin-right: 8px; }
.pink { background: #dcc4c6; border: 1px solid #999; }
.listener input { width: 96px; padding-left: 5px; border: 1px solid #888; background: #fff; font: 12px/16px "Liberation Mono", monospace; }
.info-rows { flex: 1; min-width: 0; display: grid; grid-template-rows: 1fr 1fr; gap: 5px; }
.row { display: flex; align-items: center; min-width: 0; }
.box { display: flex; align-items: center; justify-content: flex-start; height: 19px; padding: 2px 0 0 5px; border: solid #999; border-width: 1px 0 0 1px; white-space: nowrap; }
.grow { flex: 1; min-width: 0; }
.right { width: 100px; margin-left: 3px; }
.ic { width: 27px; }
.row label { width: 15px; text-align: right; }
.row input { width: 55px; height: 19px; padding-left: 2px; border: solid #333; border-width: 2px 0 0 2px; background: #fff; }
.row .spin { margin-left: 1px; }
.iso { width: 22px; height: 19px; margin-left: 3px; background: #f0d880; }
.key { width: 44px; margin-left: 3px; border: solid #888; border-width: 0 1px 1px 0; }
.keys, .filters { display: grid; grid-template-rows: 1fr 1fr; margin-left: 4px; gap: 1px; }
.keys { width: 47px; }
.keys button, .kf { border: solid #999; border-width: 0 1px 1px 0; }
.filters { width: 116px; }
.filters select { padding-left: 1px; border: solid #555; border-width: 2px 0 0 2px; background-color: #e4e4e4; }
.filters div { display: flex; }
.tangent { width: 27px; }
.kf { flex: 1; }
.play-area { display: grid; grid-template-rows: 1fr 1fr; margin-left: 7px; width: 123px; }
.play-area div { display: flex; align-items: center; gap: 3px; }
.play-area i { width: 1px; height: 16px; background: #aaa; }
.play-area button { width: 20px; }
.play-area input { width: 62px; height: 18px; padding-left: 2px; border: solid #333; border-width: 2px 0 0 2px; background: #fff; }
.nav { display: grid; grid-template-columns: repeat(4, 23px); }
```
